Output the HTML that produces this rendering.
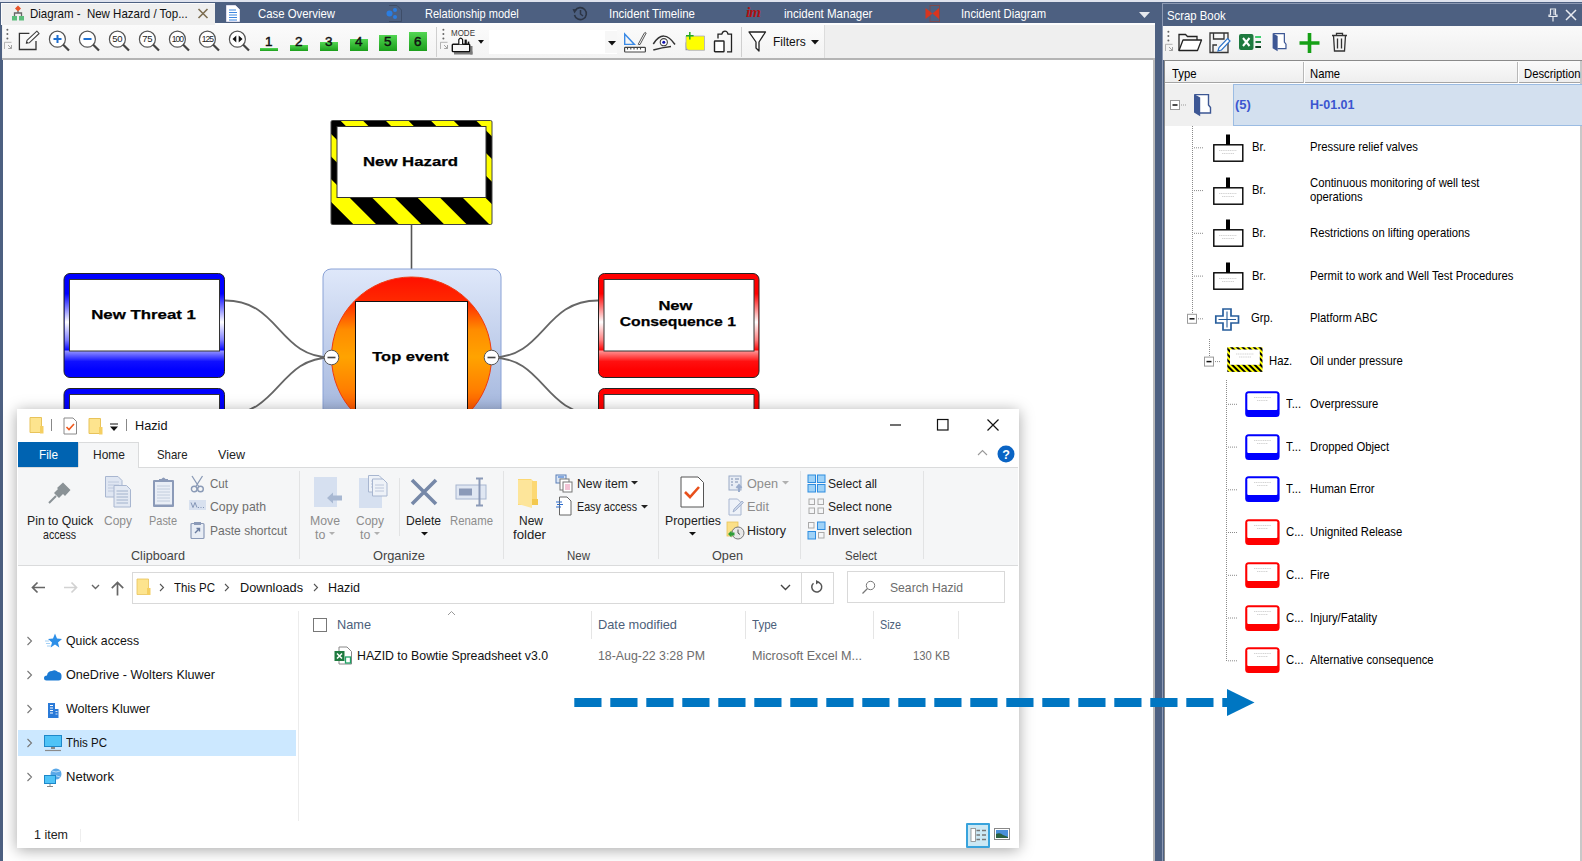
<!DOCTYPE html>
<html><head><meta charset="utf-8">
<style>
*{box-sizing:border-box;margin:0;padding:0}
html,body{width:1582px;height:861px;overflow:hidden}
body{position:relative;background:#4d6081;font-family:"Liberation Sans",sans-serif;color:#000}
.a{position:absolute}
.t{position:absolute;white-space:nowrap;line-height:1}
svg{position:absolute;overflow:visible}
.ex{font-size:12.4px;transform-origin:0 0}
.sb{font-size:13.4px;transform:scaleX(0.843);transform-origin:0 0;color:#000}
</style></head><body>
<!-- top strip -->
<div class="a" style="left:0;top:0;width:1582px;height:2px;background:#dfe3ee"></div>

<!-- ===== main tabs ===== -->



<div class="a" style="left:1px;top:3px;width:214px;height:21.5px;background:#efefef;border-top:1px solid #fbfbfb;border-left:1px solid #fbfbfb"></div>
<!-- tab contents -->
<svg style="left:11px;top:5px" width="14" height="16" viewBox="0 0 14 16">
 <path d="M7 0.5 L10 3.5 L7 6.5 L4 3.5Z" fill="#e8542a"/>
 <path d="M7 6 V8 M3.5 11 V8 H10.5 V11" stroke="#666" stroke-width="1.3" fill="none"/>
 <rect x="1" y="11" width="5" height="4.5" fill="#5cbd7c"/><rect x="8" y="11" width="5" height="4.5" fill="#5cbd7c"/>
</svg>
<div class="t" style="left:30.3px;top:7.3px;font-size:13px;color:#111;transform:scaleX(0.885);transform-origin:0 0">Diagram -&nbsp; New Hazard / Top...</div>
<svg style="left:197px;top:8px" width="12" height="11" viewBox="0 0 12 11"><path d="M1.5 1 L10.5 10 M10.5 1 L1.5 10" stroke="#7d6e52" stroke-width="1.6"/></svg>

<svg style="left:226px;top:5px" width="14" height="17" viewBox="0 0 14 17">
 <path d="M0.5 0.5 H9.5 L13.5 4.5 V16.5 H0.5Z" fill="#fff" stroke="#dde" stroke-width="1"/>
 <path d="M3 5H10M3 7.5H11M3 10H11M3 12.5H11M3 15H11" stroke="#3d86e0" stroke-width="1.2"/>
</svg>
<div class="t" style="left:257.6px;top:7.3px;font-size:13px;color:#fff;transform:scaleX(0.874);transform-origin:0 0">Case Overview</div>

<svg style="left:386px;top:5px" width="16" height="17" viewBox="0 0 16 17">
 <path d="M3 0.5 H11 L15.5 5 V16.5 H3" fill="none" stroke="#3e4d68" stroke-width="1"/>
 <circle cx="3.5" cy="8.5" r="3" fill="#2a7de1"/><circle cx="9" cy="5" r="2" fill="#2a7de1"/><circle cx="9" cy="12" r="2" fill="#2a7de1"/>
</svg>
<div class="t" style="left:424.9px;top:7.3px;font-size:13px;color:#fff;transform:scaleX(0.848);transform-origin:0 0">Relationship model</div>

<svg style="left:572px;top:6px" width="16" height="15" viewBox="0 0 16 15">
 <path d="M3.2 4.5 A6 6 0 1 1 2.5 9" fill="none" stroke="#2c3545" stroke-width="1.6"/>
 <path d="M0.5 3 L5 3.5 L2.5 7.5Z" fill="#2c3545"/>
 <path d="M8.5 4 V8 L11 10" fill="none" stroke="#2c3545" stroke-width="1.5"/>
</svg>
<div class="t" style="left:609px;top:7.3px;font-size:13px;color:#fff;transform:scaleX(0.881);transform-origin:0 0">Incident Timeline</div>

<div class="t" style="left:746px;top:5px;font-family:'Liberation Serif',serif;font-style:italic;font-weight:bold;font-size:15px;color:#b01010;letter-spacing:-1px">im</div>
<div class="t" style="left:783.5px;top:7.3px;font-size:13px;color:#fff;transform:scaleX(0.887);transform-origin:0 0">incident Manager</div>

<svg style="left:925px;top:5px" width="15" height="17" viewBox="0 0 15 17">
 <rect x="5" y="0.5" width="9.5" height="16" fill="none" stroke="#7a4a50" stroke-width="1"/>
 <path d="M0.5 3 L7.5 8.5 L0.5 14Z M14 3 L7.5 8.5 L14 14Z" fill="#d8351f"/>
</svg>
<div class="t" style="left:961px;top:7.3px;font-size:13px;color:#fff;transform:scaleX(0.865);transform-origin:0 0">Incident Diagram</div>
<svg style="left:1139px;top:12px" width="11" height="6" viewBox="0 0 11 6"><path d="M0 0H11L5.5 6Z" fill="#e6e9ef"/></svg>

<!-- scrap book header -->
<div class="t" style="left:1167.3px;top:8.9px;font-size:13px;color:#fff;transform:scaleX(0.873);transform-origin:0 0">Scrap Book</div>
<svg style="left:1548px;top:8px" width="10" height="14" viewBox="0 0 10 14"><path d="M2.5 1H7.5V7H9V8.5H1V7H2.5Z M5 8.5V13.5" fill="none" stroke="#e8ebf0" stroke-width="1.2"/><path d="M6 2V7" stroke="#e8ebf0" stroke-width="1"/></svg>
<svg style="left:1565px;top:9px" width="12" height="12" viewBox="0 0 12 12"><path d="M1 1L11 11M11 1L1 11" stroke="#e8ebf0" stroke-width="1.5"/></svg>

<!-- ===== toolbar ===== -->
<div class="a" style="left:2px;top:23px;width:1153px;height:37px;background:#efefef;border-top:2px solid #fdfdfd;border-bottom:2px solid #b4b4b4"></div>
<div class="a" style="left:2px;top:23px;width:213px;height:1.5px;background:#efefef"></div>


<!-- toolbar contents -->
<div class="a" style="left:3px;top:25px;width:822px;height:33px;background:linear-gradient(#fbfbfb,#f3f3f3);border-right:1px solid #dcdcdc"></div>
<svg style="left:3px;top:28px" width="10" height="22" viewBox="0 0 10 22">
 <circle cx="4.4" cy="1.8" r="1" fill="#666"/><circle cx="4.4" cy="6.1" r="1" fill="#666"/><circle cx="4.4" cy="10.4" r="1" fill="#666"/>
 <path d="M1.5 21V14.3H8.5" fill="none" stroke="#aaa" stroke-width="0.9"/><path d="M5 17L8.3 20.3M8.5 17V20.5H5.2" fill="none" stroke="#999" stroke-width="0.9"/>
</svg>
<!-- edit -->
<svg style="left:19px;top:31px" width="22" height="20" viewBox="0 0 22 20">
 <path d="M10.4 2.35H0.4V18.5H17V10" fill="none" stroke="#333" stroke-width="1.3"/>
 <path d="M7.3 12.3L8.0 9.4L17.9 0.1L20.1 2.5L10.2 11.8Z" fill="#fff" stroke="#444" stroke-width="1.1" stroke-linejoin="round"/>
 <path d="M7.3 12.3L7.8 10.5L9.1 11.8Z" fill="#222"/>
</svg>
<svg style="left:49px;top:30px" width="22" height="22" viewBox="0 0 22 22">
 <circle cx="8.4" cy="9.2" r="8" fill="#fff" stroke="#555" stroke-width="1.2"/>
 <path d="M14 14.5L20 20.5" stroke="#444" stroke-width="2.2"/><path d="M4.5 9H12.5M8.5 5V13" stroke="#1e6fd0" stroke-width="2"/></svg>
<svg style="left:79px;top:30px" width="22" height="22" viewBox="0 0 22 22">
 <circle cx="8.4" cy="9.2" r="8" fill="#fff" stroke="#555" stroke-width="1.2"/>
 <path d="M14 14.5L20 20.5" stroke="#444" stroke-width="2.2"/><path d="M4.5 9H12.5" stroke="#1e6fd0" stroke-width="2"/></svg>
<svg style="left:109px;top:30px" width="22" height="22" viewBox="0 0 22 22">
 <circle cx="8.4" cy="9.2" r="8" fill="#fff" stroke="#555" stroke-width="1.2"/>
 <path d="M14 14.5L20 20.5" stroke="#444" stroke-width="2.2"/><text x="8.3" y="12.4" text-anchor="middle" font-family="Liberation Sans" font-size="9.5" letter-spacing="-0.2" fill="#222">50</text></svg>
<svg style="left:139px;top:30px" width="22" height="22" viewBox="0 0 22 22">
 <circle cx="8.4" cy="9.2" r="8" fill="#fff" stroke="#555" stroke-width="1.2"/>
 <path d="M14 14.5L20 20.5" stroke="#444" stroke-width="2.2"/><text x="8.3" y="12.4" text-anchor="middle" font-family="Liberation Sans" font-size="9.5" letter-spacing="-0.2" fill="#222">75</text></svg>
<svg style="left:169px;top:30px" width="22" height="22" viewBox="0 0 22 22">
 <circle cx="8.4" cy="9.2" r="8" fill="#fff" stroke="#555" stroke-width="1.2"/>
 <path d="M14 14.5L20 20.5" stroke="#444" stroke-width="2.2"/><text x="8.3" y="12.4" text-anchor="middle" font-family="Liberation Sans" font-size="8.6" letter-spacing="-1px" fill="#222">100</text></svg>
<svg style="left:199px;top:30px" width="22" height="22" viewBox="0 0 22 22">
 <circle cx="8.4" cy="9.2" r="8" fill="#fff" stroke="#555" stroke-width="1.2"/>
 <path d="M14 14.5L20 20.5" stroke="#444" stroke-width="2.2"/><text x="8.3" y="12.4" text-anchor="middle" font-family="Liberation Sans" font-size="8.6" letter-spacing="-1px" fill="#222">125</text></svg>
<svg style="left:229px;top:30px" width="22" height="22" viewBox="0 0 22 22">
 <circle cx="8.4" cy="9.2" r="8" fill="#fff" stroke="#555" stroke-width="1.2"/>
 <path d="M14 14.5L20 20.5" stroke="#444" stroke-width="2.2"/><path d="M3.5 9L7.3 5.5V12.5Z M13.5 9L9.7 5.5V12.5Z" fill="#111"/></svg>
<div class="a" style="left:260px;top:48px;width:17.5px;height:3px;background:linear-gradient(#53d653,#1b9e1b)"></div>
<div class="t" style="left:260px;width:17.5px;text-align:center;top:34.5px;font-size:13.5px;color:#111;-webkit-text-stroke:0.45px #111">1</div>
<div class="a" style="left:290px;top:45px;width:17.5px;height:6px;background:linear-gradient(#53d653,#1b9e1b)"></div>
<div class="t" style="left:290px;width:17.5px;text-align:center;top:34.5px;font-size:13.5px;color:#111;-webkit-text-stroke:0.45px #111">2</div>
<div class="a" style="left:320px;top:42px;width:17.5px;height:9px;background:linear-gradient(#53d653,#1b9e1b)"></div>
<div class="t" style="left:320px;width:17.5px;text-align:center;top:34.5px;font-size:13.5px;color:#111;-webkit-text-stroke:0.45px #111">3</div>
<div class="a" style="left:350px;top:38.5px;width:17.5px;height:12.5px;background:linear-gradient(#53d653,#1b9e1b)"></div>
<div class="t" style="left:350px;width:17.5px;text-align:center;top:34.5px;font-size:13.5px;color:#111;-webkit-text-stroke:0.45px #111">4</div>
<div class="a" style="left:379px;top:35px;width:17.5px;height:16px;background:linear-gradient(#53d653,#1b9e1b)"></div>
<div class="t" style="left:379px;width:17.5px;text-align:center;top:34.5px;font-size:13.5px;color:#111;-webkit-text-stroke:0.45px #111">5</div>
<div class="a" style="left:409px;top:32px;width:17.5px;height:19px;background:linear-gradient(#53d653,#1b9e1b)"></div>
<div class="t" style="left:409px;width:17.5px;text-align:center;top:34.5px;font-size:13.5px;color:#111;-webkit-text-stroke:0.45px #111">6</div>
<div class="a" style="left:436px;top:27px;width:1px;height:30px;background:#cfcfcf"></div>
<svg style="left:439px;top:28px" width="10" height="22" viewBox="0 0 10 22">
 <circle cx="4.4" cy="1.8" r="1" fill="#666"/><circle cx="4.4" cy="6.1" r="1" fill="#666"/><circle cx="4.4" cy="10.4" r="1" fill="#666"/>
 <path d="M1.5 21V14.3H8.5" fill="none" stroke="#aaa" stroke-width="0.9"/><path d="M5 17L8.3 20.3M8.5 17V20.5H5.2" fill="none" stroke="#999" stroke-width="0.9"/>
</svg>
<div class="t" style="left:451px;top:28.5px;font-size:8.6px;color:#3a3a3a;transform:scaleX(0.93);transform-origin:0 0">MODE</div>
<svg style="left:450px;top:37px" width="24" height="18" viewBox="0 0 24 18">
 <rect x="4" y="14.5" width="18.5" height="3" fill="#7a7a7a"/><rect x="20.3" y="9" width="2.2" height="8.5" fill="#7a7a7a"/>
 <rect x="2.3" y="7.2" width="17.4" height="7.4" rx="0.8" fill="#f6f6f6" stroke="#111" stroke-width="1.4"/>
 <path d="M8.8 7.2V2.6Q10.7 -0.4 12.6 2.6V7.2" fill="#fff" stroke="#111" stroke-width="1.2"/>
 <rect x="14.6" y="2.6" width="2.2" height="4.6" fill="#111"/><rect x="17.7" y="4.6" width="1.6" height="2.6" fill="#111"/>
</svg>
<svg style="left:477.5px;top:40px" width="6" height="4" viewBox="0 0 6 4"><path d="M0 0H6L3 3.8Z" fill="#111"/></svg>
<div class="a" style="left:489px;top:30px;width:128px;height:24px;background:#fff"></div>
<div class="a" style="left:605px;top:31px;width:12px;height:22px;background:#f7f7f7"></div>
<svg style="left:607.5px;top:41px" width="8" height="5" viewBox="0 0 8 5"><path d="M0 0H8L4 4.5Z" fill="#111"/></svg>
<svg style="left:623px;top:31px" width="24" height="22" viewBox="0 0 24 22">
 <path d="M1.7 3V13.4H11.4Z" fill="none" stroke="#3a8ae6" stroke-width="1.4" stroke-linejoin="miter"/>
 <path d="M15.2 13.3L21.2 2.2Q22.3 0.8 23.2 2.0L17.0 13.6Z" fill="#fff" stroke="#555" stroke-width="1"/>
 <rect x="1.6" y="16.4" width="20.8" height="4.6" rx="0.8" fill="#fff" stroke="#444" stroke-width="1.2"/>
 <path d="M4.5 16.5V18.5M7.8 16.5V18.5M11 16.5V18.5M14.3 16.5V18.5M17.5 16.5V18.5" stroke="#444" stroke-width="1.1"/>
</svg>
<svg style="left:652px;top:34px" width="25" height="18" viewBox="0 0 25 18">
 <path d="M1.3 10Q11.5 -6 23 10.5" fill="none" stroke="#333" stroke-width="1.5"/>
 <circle cx="11.8" cy="8.2" r="3.6" fill="#fff" stroke="#444" stroke-width="1.1"/><circle cx="11.8" cy="8.2" r="1.5" fill="#1010b0"/>
 <path d="M1.3 16Q10 13.5 19 12.5" fill="none" stroke="#333" stroke-width="1.5"/>
</svg>
<svg style="left:684px;top:31px" width="22" height="21" viewBox="0 0 22 21">
 <path d="M1.5 11V19.3H6Z" fill="#999"/>
 <path d="M2 5H20.5V19.3H6Q2 19.3 2 15Z" fill="#ffff00" stroke="#a8a8c8" stroke-width="0.8"/>
 <path d="M5.8 1V8.5M2 4.8H9.6" stroke="#22aa22" stroke-width="1.5"/>
</svg>
<svg style="left:713px;top:30px" width="20" height="23" viewBox="0 0 20 23">
 <path d="M5 8.5V4.2H8.8Q9.6 1.2 12 1.2Q14.4 1.2 15 4.2H18.5V21.8H14" fill="none" stroke="#222" stroke-width="1.3"/>
 <rect x="1.5" y="11" width="9.5" height="10.8" rx="0.6" fill="#fff" stroke="#222" stroke-width="1.4"/>
</svg>
<div class="a" style="left:741px;top:27px;width:1px;height:30px;background:#cfcfcf"></div>
<svg style="left:748px;top:31px" width="19" height="21" viewBox="0 0 19 21">
 <path d="M1 1H17.5L11 11V20L8 17V11Z" fill="#fff" stroke="#222" stroke-width="1.3" stroke-linejoin="round"/>
</svg>
<div class="t" style="left:773.3px;top:34.9px;font-size:13px;color:#111;transform:scaleX(0.924);transform-origin:0 0">Filters</div>
<svg style="left:810.5px;top:40px" width="8" height="5" viewBox="0 0 8 5"><path d="M0 0H8L4 4.5Z" fill="#111"/></svg>

<!-- ===== canvas ===== -->
<div class="a" style="left:3px;top:60px;width:1150px;height:801px;background:#fff"></div>
<div class="a" style="left:1153px;top:58px;width:2px;height:803px;background:#b9b9b9"></div>

<!-- ===== diagram ===== -->
<svg style="left:0;top:0" width="1153" height="861" viewBox="0 0 1153 861">
 <defs>
  <pattern id="haz" patternUnits="userSpaceOnUse" width="32" height="32" patternTransform="rotate(-45) translate(27.4 0)">
   <rect width="32" height="32" fill="#000"/><rect x="0" y="0" width="16" height="32" fill="#ffff00"/>
  </pattern>
  <linearGradient id="blueSide" x1="0" y1="0" x2="0" y2="1">
   <stop offset="0" stop-color="#0000ff"/><stop offset="0.2" stop-color="#0000ff"/><stop offset="0.6" stop-color="#ffffff"/><stop offset="0.85" stop-color="#8080ff"/><stop offset="1" stop-color="#0000ff"/>
  </linearGradient>
  <linearGradient id="blueBot" x1="0" y1="0" x2="0" y2="1">
   <stop offset="0" stop-color="#9a9aff"/><stop offset="0.55" stop-color="#1010ff"/><stop offset="1" stop-color="#0000ff"/>
  </linearGradient>
  <linearGradient id="redSide" x1="0" y1="0" x2="0" y2="1">
   <stop offset="0" stop-color="#ff0000"/><stop offset="0.2" stop-color="#ff0000"/><stop offset="0.6" stop-color="#ffffff"/><stop offset="0.85" stop-color="#ff8080"/><stop offset="1" stop-color="#ff0000"/>
  </linearGradient>
  <linearGradient id="redBot" x1="0" y1="0" x2="0" y2="1">
   <stop offset="0" stop-color="#ff9a9a"/><stop offset="0.55" stop-color="#ff1010"/><stop offset="1" stop-color="#ff0000"/>
  </linearGradient>
  <linearGradient id="cont" x1="0" y1="0" x2="0" y2="1">
   <stop offset="0" stop-color="#dfe8fa"/><stop offset="1" stop-color="#8ea4d2"/>
  </linearGradient>
  <linearGradient id="circ" x1="0" y1="0" x2="0" y2="1">
   <stop offset="0" stop-color="#ff1000"/><stop offset="0.16" stop-color="#ff2a00"/><stop offset="0.33" stop-color="#ff8c00"/><stop offset="0.5" stop-color="#ffa300"/><stop offset="0.7" stop-color="#ff8000"/><stop offset="1" stop-color="#ff2000"/>
  </linearGradient>
  <g id="box">
   <rect x="0" y="0" width="160.5" height="104" rx="6"/>
  </g>
 </defs>
 <!-- hazard -->
 <rect x="331" y="120.5" width="161" height="104" rx="1.5" fill="url(#haz)" stroke="#444" stroke-width="1"/>
 <rect x="337" y="126.5" width="149" height="71" fill="#fff" stroke="#333" stroke-width="1"/>
 <text x="363" y="165.6" textLength="95" lengthAdjust="spacingAndGlyphs" font-family="Liberation Sans" font-weight="bold" font-size="13.2" fill="#000" stroke="#000" stroke-width="0.25">New Hazard</text>
 <path d="M411.5 224.5V277" stroke="#555" stroke-width="1.6"/>
 <!-- container -->
 <rect x="323" y="269" width="178" height="200" rx="8" fill="url(#cont)" stroke="#8aa2d6" stroke-width="1"/>
 <circle cx="411.5" cy="357" r="80" fill="url(#circ)" stroke="#f03a10" stroke-width="1"/>
 <rect x="355.5" y="301.5" width="112" height="150" fill="#fff" stroke="#111" stroke-width="1"/>
 <text x="372.3" y="360.9" textLength="76.5" lengthAdjust="spacingAndGlyphs" font-family="Liberation Sans" font-weight="bold" font-size="13.2" fill="#000" stroke="#000" stroke-width="0.25">Top event</text>
 <!-- curves -->
 <path d="M225 300.5 C280 300.5 278 357.5 331.5 357.5 M225 414.5 C280 414.5 278 357.5 331.5 357.5" fill="none" stroke="#666" stroke-width="1.8"/>
 <path d="M598 300.5 C543 300.5 545 357.5 491.5 357.5 M598 414.5 C543 414.5 545 357.5 491.5 357.5" fill="none" stroke="#666" stroke-width="1.8"/>
 <circle cx="331.5" cy="357.5" r="7.3" fill="#fff" stroke="#555" stroke-width="1"/><path d="M327.5 357.5H335.5" stroke="#444" stroke-width="1.6"/>
 <circle cx="491.5" cy="357.5" r="7.3" fill="#fff" stroke="#555" stroke-width="1"/><path d="M487.5 357.5H495.5" stroke="#444" stroke-width="1.6"/>
 <g>
  <rect x="64" y="273.5" width="160.5" height="104" rx="6" fill="#0000ff"/>
  <rect x="64.5" y="279.5" width="159.5" height="71" fill="url(#blueSide)"/>
  <rect x="64.5" y="350.5" width="159.5" height="20" fill="url(#blueBot)"/>
  <rect x="64" y="273.5" width="160.5" height="104" rx="6" fill="none" stroke="#222" stroke-width="1"/>
  <rect x="69.5" y="279.5" width="150" height="71.5" fill="#fff" stroke="#333" stroke-width="1"/>
  <text x="91.2" y="319" textLength="104.8" lengthAdjust="spacingAndGlyphs" font-family="Liberation Sans" font-weight="bold" font-size="13.2" fill="#000" stroke="#000" stroke-width="0.25">New Threat 1</text>
 </g>
 <g>
  <rect x="64" y="388.5" width="160.5" height="104" rx="6" fill="#0000ff"/>
  <rect x="64.5" y="394.5" width="159.5" height="71" fill="url(#blueSide)"/>
  <rect x="64.5" y="465.5" width="159.5" height="20" fill="url(#blueBot)"/>
  <rect x="64" y="388.5" width="160.5" height="104" rx="6" fill="none" stroke="#222" stroke-width="1"/>
  <rect x="69.5" y="394.5" width="150" height="71.5" fill="#fff" stroke="#333" stroke-width="1"/>
 </g>
 <g>
  <rect x="598.5" y="273.5" width="160.5" height="104" rx="6" fill="#ff0000"/>
  <rect x="599.0" y="279.5" width="159.5" height="71" fill="url(#redSide)"/>
  <rect x="599.0" y="350.5" width="159.5" height="20" fill="url(#redBot)"/>
  <rect x="598.5" y="273.5" width="160.5" height="104" rx="6" fill="none" stroke="#222" stroke-width="1"/>
  <rect x="604.0" y="279.5" width="150" height="71.5" fill="#fff" stroke="#333" stroke-width="1"/>
  <text x="658.4" y="309.7" textLength="34" lengthAdjust="spacingAndGlyphs" font-family="Liberation Sans" font-weight="bold" font-size="13.2" fill="#000" stroke="#000" stroke-width="0.25">New</text>
  <text x="619.7" y="326.4" textLength="116.3" lengthAdjust="spacingAndGlyphs" font-family="Liberation Sans" font-weight="bold" font-size="13.2" fill="#000" stroke="#000" stroke-width="0.25">Consequence 1</text>
 </g>
 <g>
  <rect x="598.5" y="388.5" width="160.5" height="104" rx="6" fill="#ff0000"/>
  <rect x="599.0" y="394.5" width="159.5" height="71" fill="url(#redSide)"/>
  <rect x="599.0" y="465.5" width="159.5" height="20" fill="url(#redBot)"/>
  <rect x="598.5" y="388.5" width="160.5" height="104" rx="6" fill="none" stroke="#222" stroke-width="1"/>
  <rect x="604.0" y="394.5" width="150" height="71.5" fill="#fff" stroke="#333" stroke-width="1"/>
 </g>
</svg>

<!-- ===== scrap book panel ===== -->
<div class="a" style="left:1162px;top:3px;width:420px;height:858px;border-left:1px solid #8c99b3;border-top:1px solid #8c99b3"></div>
<div class="a" style="left:1163px;top:26px;width:419px;height:34px;background:linear-gradient(#fafafa,#efefef)"></div>
<div class="a" style="left:1164px;top:60px;width:418px;height:801px;background:#fff;border-left:1px solid #8a8a8a;border-top:1px solid #8a8a8a"></div>


<!-- scrap toolbar -->
<svg style="left:1164px;top:30px" width="10" height="22" viewBox="0 0 10 22">
 <circle cx="4.4" cy="1.8" r="1" fill="#666"/><circle cx="4.4" cy="6.1" r="1" fill="#666"/><circle cx="4.4" cy="10.4" r="1" fill="#666"/>
 <path d="M1.5 21V14.3H8.5" fill="none" stroke="#aaa" stroke-width="0.9"/><path d="M5 17L8.3 20.3M8.5 17V20.5H5.2" fill="none" stroke="#999" stroke-width="0.9"/>
</svg>
<svg style="left:1178px;top:33px" width="24" height="19" viewBox="0 0 24 19">
 <path d="M1 17.5V1.5H7.5L9.5 3.5H19V7" fill="none" stroke="#222" stroke-width="1.3"/>
 <path d="M1 17.5L5 7H23.5L19.5 17.5Z" fill="#fff" stroke="#222" stroke-width="1.3" stroke-linejoin="round"/>
</svg>
<svg style="left:1209px;top:32px" width="22" height="22" viewBox="0 0 22 22">
 <path d="M1 1H19V20.5H1Z M4.5 1V7H15V1 M4 20.5V13H8" fill="none" stroke="#333" stroke-width="1.3"/>
 <path d="M9 19L10 15.5L18.5 6.5L21 9L12.5 18Z" fill="#fff" stroke="#2d74c9" stroke-width="1.2"/>
</svg>
<svg style="left:1239px;top:34px" width="24" height="17" viewBox="0 0 24 17">
 <rect x="0" y="0" width="14.5" height="16" rx="2" fill="#1e7a3f"/>
 <path d="M4 4L10.5 12M10.5 4L4 12" stroke="#fff" stroke-width="2"/>
 <path d="M16.5 3H22M16.5 8H22M16.5 13H22" stroke="#1e7a3f" stroke-width="2"/>
 <path d="M16.5 3H22" stroke="#3fcf6f" stroke-width="2"/><path d="M16.5 13H22" stroke="#0d3d1f" stroke-width="2"/>
</svg>
<svg style="left:1271px;top:31px" width="17" height="23" viewBox="0 0 21 25"><path d="M2.7 1.6H16.5V12L18.5 14.5V20H8" fill="#fff" stroke="#3d5794" stroke-width="1.5"/><path d="M2 1L8.2 4.6V23.2L2 19.6Z" fill="#3d5794"/></svg>
<svg style="left:1299px;top:33px" width="21" height="20" viewBox="0 0 21 20"><path d="M10.5 0V20M0.5 10H20.5" stroke="#16a016" stroke-width="3.6"/></svg>
<svg style="left:1331px;top:32px" width="17" height="20" viewBox="0 0 17 20">
 <path d="M1 3.5H16 M5.5 3.5V1.3H11.5V3.5" fill="none" stroke="#333" stroke-width="1.3"/>
 <path d="M2.5 3.5L3.5 19H13.5L14.5 3.5 M6.5 6.5V16.5 M10.5 6.5V16.5" fill="none" stroke="#333" stroke-width="1.3"/>
</svg>


<!-- scrap grid header -->
<div class="a" style="left:1165px;top:61px;width:417px;height:22px;background:linear-gradient(#fafafa,#eeeeee);border-bottom:1px solid #a5a5a5"></div>
<div class="a" style="left:1303px;top:62px;width:1px;height:21px;background:#b8b8b8"></div><div class="a" style="left:1304px;top:62px;width:1px;height:21px;background:#fff"></div>
<div class="a" style="left:1517px;top:62px;width:1px;height:21px;background:#b8b8b8"></div><div class="a" style="left:1518px;top:62px;width:1px;height:21px;background:#fff"></div>
<div class="a" style="left:1580px;top:61px;width:2px;height:800px;background:#c8c8c8"></div>
<div class="t sb" style="left:1172px;top:66.5px">Type</div>
<div class="t sb" style="left:1310px;top:66.5px">Name</div>
<div class="t sb" style="left:1524px;top:66.5px">Description</div>
<!-- selected row -->
<div class="a" style="left:1165px;top:84px;width:68px;height:42px;background:#f0f0f0"></div>
<div class="a" style="left:1233px;top:84px;width:349px;height:42px;background:#d3e0ef;border:1px solid #9bbce3;border-right:none"></div>
<svg style="left:1169px;top:99px" width="20" height="13" viewBox="0 0 20 13"><rect x="1.5" y="1.5" width="9" height="9" fill="#fff" stroke="#9a9a9a"/><path d="M3.5 6H8.5" stroke="#111" stroke-width="1.5"/><path d="M12 6H18" stroke="#999" stroke-width="1" stroke-dasharray="1 1"/></svg>
<svg style="left:1192px;top:93px" width="21" height="25" viewBox="0 0 21 25"><path d="M2.7 1.6H16.5V12L18.5 14.5V20H8" fill="#fff" stroke="#3d5794" stroke-width="1.4"/><path d="M2 1L8.2 4.6V23.2L2 19.6Z" fill="#3d5794"/></svg>
<div class="t sb" style="left:1235px;top:98px;font-weight:bold;color:#3b55d0;font-size:13.4px;transform:scaleX(0.97)">(5)</div>
<div class="t sb" style="left:1310px;top:98px;font-weight:bold;color:#3b55d0;font-size:13.4px;transform:scaleX(0.935)">H-01.01</div>
<!-- tree lines -->
<svg style="left:1165px;top:126px" width="100" height="540" viewBox="1165 126 100 540">
 <path d="M1192.5 126V314 M1209.5 339V357 M1226.5 380V661" stroke="#8a8a8a" stroke-width="1" stroke-dasharray="1 1" fill="none"/>

 <path d="M1194 147.8H1204" stroke="#8a8a8a" stroke-width="1" stroke-dasharray="1 1"/>
 <path d="M1194 190.6H1204" stroke="#8a8a8a" stroke-width="1" stroke-dasharray="1 1"/>
 <path d="M1194 233.3H1204" stroke="#8a8a8a" stroke-width="1" stroke-dasharray="1 1"/>
 <path d="M1194 276.1H1204" stroke="#8a8a8a" stroke-width="1" stroke-dasharray="1 1"/>
 <rect x="1187.5" y="314.3" width="9" height="9" fill="#fff" stroke="#9a9a9a"/><path d="M1189.5 318.8H1194.5" stroke="#111" stroke-width="1.5"/><path d="M1198 318.8H1204" stroke="#8a8a8a" stroke-dasharray="1 1"/>
 <rect x="1204.5" y="357.1" width="9" height="9" fill="#fff" stroke="#9a9a9a"/><path d="M1206.5 361.6H1211.5" stroke="#111" stroke-width="1.5"/><path d="M1215 361.6H1221" stroke="#8a8a8a" stroke-dasharray="1 1"/>
 <path d="M1228 404.3H1238" stroke="#8a8a8a" stroke-width="1" stroke-dasharray="1 1"/>
 <path d="M1228 447.1H1238" stroke="#8a8a8a" stroke-width="1" stroke-dasharray="1 1"/>
 <path d="M1228 489.8H1238" stroke="#8a8a8a" stroke-width="1" stroke-dasharray="1 1"/>
 <path d="M1228 532.5H1238" stroke="#8a8a8a" stroke-width="1" stroke-dasharray="1 1"/>
 <path d="M1228 575.3H1238" stroke="#8a8a8a" stroke-width="1" stroke-dasharray="1 1"/>
 <path d="M1228 618.0H1238" stroke="#8a8a8a" stroke-width="1" stroke-dasharray="1 1"/>
 <path d="M1228 660.8H1238" stroke="#8a8a8a" stroke-width="1" stroke-dasharray="1 1"/>
</svg>
<svg style="left:1212px;top:132.8px" width="32" height="30" viewBox="0 0 32 30"><rect x="14" y="1.5" width="4" height="12" fill="#000"/><rect x="1.8" y="11.8" width="29" height="16.4" fill="#fff" stroke="#000" stroke-width="1.4"/><path d="M7 17.5H25 M10 20.5H22" stroke="#c8c8c8" stroke-width="0.8" stroke-dasharray="1.2 0.6"/></svg>
<div class="t sb" style="left:1251.7px;top:140.46px">Br.</div>
<div class="t sb" style="left:1309.5px;top:140.46px">Pressure relief valves</div>
<svg style="left:1212px;top:175.6px" width="32" height="30" viewBox="0 0 32 30"><rect x="14" y="1.5" width="4" height="12" fill="#000"/><rect x="1.8" y="11.8" width="29" height="16.4" fill="#fff" stroke="#000" stroke-width="1.4"/><path d="M7 17.5H25 M10 20.5H22" stroke="#c8c8c8" stroke-width="0.8" stroke-dasharray="1.2 0.6"/></svg>
<div class="t sb" style="left:1251.7px;top:183.21px">Br.</div>
<div class="t sb" style="left:1309.5px;top:176.41px">Continuous monitoring of well test</div>
<div class="t sb" style="left:1309.5px;top:190.01px">operations</div>
<svg style="left:1212px;top:218.3px" width="32" height="30" viewBox="0 0 32 30"><rect x="14" y="1.5" width="4" height="12" fill="#000"/><rect x="1.8" y="11.8" width="29" height="16.4" fill="#fff" stroke="#000" stroke-width="1.4"/><path d="M7 17.5H25 M10 20.5H22" stroke="#c8c8c8" stroke-width="0.8" stroke-dasharray="1.2 0.6"/></svg>
<div class="t sb" style="left:1251.7px;top:225.96px">Br.</div>
<div class="t sb" style="left:1309.5px;top:225.96px">Restrictions on lifting operations</div>
<svg style="left:1212px;top:261.1px" width="32" height="30" viewBox="0 0 32 30"><rect x="14" y="1.5" width="4" height="12" fill="#000"/><rect x="1.8" y="11.8" width="29" height="16.4" fill="#fff" stroke="#000" stroke-width="1.4"/><path d="M7 17.5H25 M10 20.5H22" stroke="#c8c8c8" stroke-width="0.8" stroke-dasharray="1.2 0.6"/></svg>
<div class="t sb" style="left:1251.7px;top:268.71px">Br.</div>
<div class="t sb" style="left:1309.5px;top:268.71px">Permit to work and Well Test Procedures</div>
<svg style="left:1215px;top:307.8px" width="25" height="23" viewBox="0 0 25 23"><path d="M8 1H16V8H23.5V15H16V22H8V15H0.8V8H8Z" fill="#fff" stroke="#275d9c" stroke-width="1.7"/><path d="M12 3.5V19.5M3.5 11.5H21" stroke="#275d9c" stroke-width="1.1"/></svg>
<div class="t sb" style="left:1251px;top:311.46px">Grp.</div>
<div class="t sb" style="left:1309.5px;top:311.46px">Platform ABC</div>
<svg style="left:1227px;top:347.4px" width="36" height="25" viewBox="0 0 36 25"><defs><pattern id="hz2" patternUnits="userSpaceOnUse" width="4" height="4" patternTransform="rotate(-45)"><rect width="4" height="4" fill="#000"/><rect width="2" height="4" fill="#ffff00"/></pattern></defs><rect x="0.3" y="0.2" width="35.2" height="24.7" fill="url(#hz2)"/><rect x="3" y="2.5" width="29.8" height="15.3" fill="#fff"/><path d="M9 7H27 M12 10H24" stroke="#c8c8c8" stroke-width="0.8" stroke-dasharray="1.2 0.6"/></svg>
<div class="t sb" style="left:1268.8px;top:354.21px">Haz.</div>
<div class="t sb" style="left:1309.5px;top:354.21px">Oil under pressure</div>
<svg style="left:1245px;top:390.8px" width="35" height="27" viewBox="0 0 35 27"><rect x="0.2" y="0.2" width="34.4" height="25.8" rx="3.5" fill="#0000ff"/><rect x="2.3" y="2.3" width="30" height="16.8" rx="1" fill="#fff"/><path d="M9 6.5H26 M12 9.5H23" stroke="#c8c8c8" stroke-width="0.8" stroke-dasharray="1.2 0.6"/></svg>
<div class="t sb" style="left:1286px;top:396.96px">T...</div>
<div class="t sb" style="left:1309.5px;top:396.96px">Overpressure</div>
<svg style="left:1245px;top:433.6px" width="35" height="27" viewBox="0 0 35 27"><rect x="0.2" y="0.2" width="34.4" height="25.8" rx="3.5" fill="#0000ff"/><rect x="2.3" y="2.3" width="30" height="16.8" rx="1" fill="#fff"/><path d="M9 6.5H26 M12 9.5H23" stroke="#c8c8c8" stroke-width="0.8" stroke-dasharray="1.2 0.6"/></svg>
<div class="t sb" style="left:1286px;top:439.71px">T...</div>
<div class="t sb" style="left:1309.5px;top:439.71px">Dropped Object</div>
<svg style="left:1245px;top:476.3px" width="35" height="27" viewBox="0 0 35 27"><rect x="0.2" y="0.2" width="34.4" height="25.8" rx="3.5" fill="#0000ff"/><rect x="2.3" y="2.3" width="30" height="16.8" rx="1" fill="#fff"/><path d="M9 6.5H26 M12 9.5H23" stroke="#c8c8c8" stroke-width="0.8" stroke-dasharray="1.2 0.6"/></svg>
<div class="t sb" style="left:1286px;top:482.46px">T...</div>
<div class="t sb" style="left:1309.5px;top:482.46px">Human Error</div>
<svg style="left:1245px;top:519.0px" width="35" height="27" viewBox="0 0 35 27"><rect x="0.2" y="0.2" width="34.4" height="25.8" rx="3.5" fill="#ff0000"/><rect x="2.3" y="2.3" width="30" height="16.8" rx="1" fill="#fff"/><path d="M9 6.5H26 M12 9.5H23" stroke="#c8c8c8" stroke-width="0.8" stroke-dasharray="1.2 0.6"/></svg>
<div class="t sb" style="left:1286px;top:525.21px">C...</div>
<div class="t sb" style="left:1309.5px;top:525.21px">Unignited Release</div>
<svg style="left:1245px;top:561.8px" width="35" height="27" viewBox="0 0 35 27"><rect x="0.2" y="0.2" width="34.4" height="25.8" rx="3.5" fill="#ff0000"/><rect x="2.3" y="2.3" width="30" height="16.8" rx="1" fill="#fff"/><path d="M9 6.5H26 M12 9.5H23" stroke="#c8c8c8" stroke-width="0.8" stroke-dasharray="1.2 0.6"/></svg>
<div class="t sb" style="left:1286px;top:567.96px">C...</div>
<div class="t sb" style="left:1309.5px;top:567.96px">Fire</div>
<svg style="left:1245px;top:604.5px" width="35" height="27" viewBox="0 0 35 27"><rect x="0.2" y="0.2" width="34.4" height="25.8" rx="3.5" fill="#ff0000"/><rect x="2.3" y="2.3" width="30" height="16.8" rx="1" fill="#fff"/><path d="M9 6.5H26 M12 9.5H23" stroke="#c8c8c8" stroke-width="0.8" stroke-dasharray="1.2 0.6"/></svg>
<div class="t sb" style="left:1286px;top:610.71px">C...</div>
<div class="t sb" style="left:1309.5px;top:610.71px">Injury/Fatality</div>
<svg style="left:1245px;top:647.3px" width="35" height="27" viewBox="0 0 35 27"><rect x="0.2" y="0.2" width="34.4" height="25.8" rx="3.5" fill="#ff0000"/><rect x="2.3" y="2.3" width="30" height="16.8" rx="1" fill="#fff"/><path d="M9 6.5H26 M12 9.5H23" stroke="#c8c8c8" stroke-width="0.8" stroke-dasharray="1.2 0.6"/></svg>
<div class="t sb" style="left:1286px;top:653.46px">C...</div>
<div class="t sb" style="left:1309.5px;top:653.46px">Alternative consequence</div>
<!-- ===== explorer ===== -->
<div class="a" id="exp" style="left:17px;top:409px;width:1002px;height:439px;background:#fff;box-shadow:0 2px 14px rgba(0,0,0,0.35)"></div>

<!-- explorer title bar -->
<svg style="left:29px;top:416px" width="16" height="19" viewBox="0 0 16 19"><path d="M1 1.5H12.5V16.5H1Z" fill="#fde48e" stroke="#e8c35a" stroke-width="1"/><path d="M11 10H14.5V17.5H11Z" fill="#f5cf62"/></svg>
<div class="a" style="left:51px;top:419px;width:1px;height:12px;background:#888"></div>
<svg style="left:63px;top:417px" width="15" height="18" viewBox="0 0 15 18"><path d="M1 1H10L13.5 4.5V17H1Z" fill="#fff" stroke="#8a8a8a" stroke-width="1"/><path d="M3.5 10L6 12.5L11 7" fill="none" stroke="#f0581c" stroke-width="1.6"/></svg>
<svg style="left:88px;top:417px" width="16" height="19" viewBox="0 0 16 19"><path d="M1 1.5H12.5V16.5H1Z" fill="#fde48e" stroke="#e8c35a" stroke-width="1"/><path d="M11 10H14.5V17.5H11Z" fill="#f5cf62"/></svg>
<svg style="left:109px;top:423px" width="10" height="9" viewBox="0 0 10 9"><path d="M1 1H9" stroke="#111" stroke-width="1"/><path d="M1 3.5H9L5 8Z" fill="#111"/></svg>
<div class="a" style="left:126px;top:419px;width:1px;height:12px;background:#888"></div>
<div class="t ex" style="left:135px;top:419.5px;color:#111;transform:scaleX(1.026)">Hazid</div>
<svg style="left:889px;top:424px" width="13" height="2" viewBox="0 0 13 2"><path d="M1 1H12" stroke="#111" stroke-width="1.2"/></svg>
<svg style="left:936px;top:418px" width="14" height="14" viewBox="0 0 14 14"><rect x="1.5" y="1.5" width="10.5" height="10.5" fill="none" stroke="#111" stroke-width="1.2"/></svg>
<svg style="left:986px;top:418px" width="14" height="14" viewBox="0 0 14 14"><path d="M1.5 1.5L12.5 12.5M12.5 1.5L1.5 12.5" stroke="#111" stroke-width="1.2"/></svg>

<!-- tabs -->
<div class="a" style="left:18px;top:442px;width:60px;height:25px;background:#0063b1"></div>
<div class="t ex" style="left:38.5px;top:449px;color:#fff;transform:scaleX(0.951)">File</div>
<div class="a" style="left:78px;top:442px;width:61px;height:26px;background:#f5f6f7;border:1px solid #dadbdc;border-bottom:none"></div>
<div class="t ex" style="left:93px;top:449px;color:#222;transform:scaleX(0.968)">Home</div>
<div class="t ex" style="left:156.5px;top:449px;color:#222;transform:scaleX(0.922)">Share</div>
<div class="t ex" style="left:218px;top:449px;color:#222;transform:scaleX(1.013)">View</div>
<svg style="left:977px;top:449px" width="11" height="7" viewBox="0 0 11 7"><path d="M1 6L5.5 1.5L10 6" fill="none" stroke="#999" stroke-width="1.1"/></svg>
<svg style="left:997px;top:445px" width="18" height="18" viewBox="0 0 18 18"><circle cx="9" cy="9" r="8.5" fill="#0a64c4"/><text x="9" y="13.6" text-anchor="middle" font-family="Liberation Sans" font-weight="bold" font-size="12.5" fill="#fff">?</text></svg>

<!-- ribbon -->
<div class="a" style="left:18px;top:467px;width:1000px;height:99px;background:#f5f6f7;border-top:1px solid #dadbdc;border-bottom:1px solid #dadbdc"></div>
<div class="a" style="left:78px;top:467px;width:60px;height:1px;background:#f5f6f7"></div>
<div class="a" style="left:298.5px;top:471px;width:1px;height:88px;background:#e2e3e4"></div>
<div class="a" style="left:503px;top:471px;width:1px;height:88px;background:#e2e3e4"></div>
<div class="a" style="left:658px;top:471px;width:1px;height:88px;background:#e2e3e4"></div>
<div class="a" style="left:800px;top:471px;width:1px;height:88px;background:#e2e3e4"></div>
<div class="a" style="left:923px;top:471px;width:1px;height:88px;background:#e2e3e4"></div>
<div class="a" style="left:398.5px;top:478px;width:1px;height:58px;background:#e2e3e4"></div>

<!-- clipboard group -->
<svg style="left:48px;top:481px" width="24" height="23" viewBox="0 0 24 23"><path d="M1 22L8 15" stroke="#8a9296" stroke-width="2"/><path d="M9 7L15 1.5L22.5 9L17 15L15 13L11 17L6 12L10 8Z" fill="#8a9296"/></svg>
<div class="t ex" style="left:27px;top:514.9px;color:#222;transform:scaleX(0.988)">Pin to Quick</div>
<div class="t ex" style="left:43px;top:528.7px;color:#222;transform:scaleX(0.855)">access</div>
<svg style="left:105px;top:476px" width="27" height="32" viewBox="0 0 27 32"><path d="M0.5 0.5H13L17 4.5V21H0.5Z" fill="#dfe6f2" stroke="#a8b6d0"/><path d="M3 6H14M3 9H14M3 12H14M3 15H14" stroke="#b5c2d8" stroke-width="0.8"/><path d="M9 9.5H21.5L25.5 13.5V31H9Z" fill="#e3e9f3" stroke="#a8b6d0"/><path d="M11.5 15H23M11.5 18H23M11.5 21H23M11.5 24H23M11.5 27H23" stroke="#9aabc8" stroke-width="0.9"/></svg>
<div class="t ex" style="left:104px;top:514.9px;color:#8d8d8d;transform:scaleX(0.968)">Copy</div>
<svg style="left:152px;top:476px" width="23" height="32" viewBox="0 0 23 32"><rect x="1" y="4" width="21" height="27" rx="1" fill="#8b9ab8"/><rect x="3" y="6" width="17" height="22.5" fill="#e9eef6"/><path d="M5 10H18M5 13H18M5 16H18M5 19H18M5 22H18M5 25H18" stroke="#b8c4d8" stroke-width="0.8"/><path d="M7 6V3H9.5Q11.5 0 13.5 3H16V6Z" fill="#8b9ab8"/></svg>
<div class="t ex" style="left:149px;top:514.9px;color:#8d8d8d;transform:scaleX(0.884)">Paste</div>
<svg style="left:190px;top:475px" width="15" height="18" viewBox="0 0 15 18"><path d="M2 1L9 12M12.5 1L5.5 12" stroke="#8a9ab6" stroke-width="1.3"/><circle cx="4.2" cy="14" r="2.8" fill="none" stroke="#8a9ab6" stroke-width="1.4"/><circle cx="10.5" cy="14" r="2.8" fill="none" stroke="#8a9ab6" stroke-width="1.4"/></svg>
<div class="t ex" style="left:210px;top:477.9px;color:#6e6e6e;transform:scaleX(0.933)">Cut</div>
<svg style="left:189px;top:500px" width="17" height="10" viewBox="0 0 17 10"><rect x="0" y="0" width="17" height="10" fill="#d8e1ef"/><path d="M2 2.5L4 7.5L6 2.5L8 7.5M9 7.5H10M11.5 7.5H12.5M14 7.5H15" stroke="#7b8db0" stroke-width="0.9" fill="none"/></svg>
<div class="t ex" style="left:210px;top:501.2px;color:#6e6e6e;transform:scaleX(0.991)">Copy path</div>
<svg style="left:190px;top:521px" width="15" height="18" viewBox="0 0 15 18"><rect x="1" y="2.5" width="13" height="15" rx="1" fill="#e8edf5" stroke="#8b9ab8" stroke-width="1.2"/><rect x="4" y="1" width="7" height="3" fill="#8b9ab8"/><path d="M5 12L9.5 7.5M6.5 7.5H9.5V10.5" stroke="#6a7ca0" stroke-width="1.4" fill="none"/></svg>
<div class="t ex" style="left:210px;top:525px;color:#6e6e6e;transform:scaleX(0.972)">Paste shortcut</div>
<div class="t ex" style="left:131px;top:550px;color:#444;transform:scaleX(1.018)">Clipboard</div>

<!-- organize -->
<svg style="left:313px;top:476px" width="30" height="33" viewBox="0 0 30 33"><rect x="1" y="1" width="23" height="30" fill="#d6e0f0"/><path d="M14 22L20 16.5V19.5H29V24.5H20V27.5Z" fill="#a8b8d2"/></svg>
<div class="t ex" style="left:310px;top:514.9px;color:#8d8d8d;transform:scaleX(0.990)">Move</div>
<div class="t ex" style="left:315px;top:528.7px;color:#8d8d8d">to</div>
<svg style="left:329px;top:532px" width="6" height="4" viewBox="0 0 6 4"><path d="M0 0H6L3 3Z" fill="#b0b0b0"/></svg>
<svg style="left:358px;top:475px" width="30" height="34" viewBox="0 0 30 34"><rect x="1" y="3" width="23" height="30" fill="#d6e0f0"/><path d="M10.5 0.5H21L25 4.5V17H10.5Z" fill="#eef2f8" stroke="#a8b6d0"/><path d="M13 6H22M13 9H22M13 12H22" stroke="#b0bdd3" stroke-width="0.8"/><path d="M14.5 4H25L29 8V21H14.5Z" fill="#eef2f8" stroke="#a8b6d0"/><path d="M17 10H26M17 13H26M17 16H26" stroke="#b0bdd3" stroke-width="0.8"/></svg>
<div class="t ex" style="left:356px;top:514.9px;color:#8d8d8d;transform:scaleX(0.968)">Copy</div>
<div class="t ex" style="left:360px;top:528.7px;color:#8d8d8d">to</div>
<svg style="left:374px;top:532px" width="6" height="4" viewBox="0 0 6 4"><path d="M0 0H6L3 3Z" fill="#b0b0b0"/></svg>
<svg style="left:410px;top:478px" width="28" height="28" viewBox="0 0 28 28"><path d="M2 2L26 26M26 2L2 26" stroke="#7688a8" stroke-width="3.6"/></svg>
<div class="t ex" style="left:406px;top:514.9px;color:#222;transform:scaleX(0.977)">Delete</div>
<svg style="left:421px;top:532px" width="7" height="4" viewBox="0 0 7 4"><path d="M0 0H7L3.5 3.5Z" fill="#111"/></svg>
<svg style="left:455px;top:477px" width="33" height="30" viewBox="0 0 33 30"><rect x="1" y="8" width="30" height="14" fill="#e0e7f2" stroke="#a8b6d0"/><rect x="4" y="11.5" width="13" height="7" fill="#8b9ab8"/><path d="M24.5 2V28M21 1.5H28M21 28.5H28" stroke="#8b9ab8" stroke-width="2"/></svg>
<div class="t ex" style="left:450px;top:514.9px;color:#8d8d8d;transform:scaleX(0.918)">Rename</div>
<div class="t ex" style="left:373px;top:550px;color:#444;transform:scaleX(1.034)">Organize</div>

<!-- new -->
<svg style="left:517px;top:478px" width="23" height="31" viewBox="0 0 23 31"><path d="M1 1H14L16 3H20V27H1Z" fill="#fcd873"/><path d="M1 2H15V30L1 26Z" fill="#fde59a"/><path d="M15 21H21V27H15Z" fill="#f3c84e"/></svg>
<div class="t ex" style="left:518.5px;top:514.9px;color:#222;transform:scaleX(0.968)">New</div>
<div class="t ex" style="left:513px;top:528.7px;color:#222;transform:scaleX(1.065)">folder</div>
<svg style="left:555px;top:474px" width="19" height="19" viewBox="0 0 19 19"><rect x="1" y="1" width="10" height="8" fill="#dbe6f5" stroke="#5a7fb8"/><path d="M3 3H9" stroke="#2a6acc"/><rect x="5" y="5" width="9" height="11" fill="#fff" stroke="#777"/><rect x="8" y="8" width="9" height="10" fill="#fff" stroke="#777"/><path d="M10 11H15M10 13H15M10 15H15" stroke="#d58" stroke-width="0.7"/></svg>
<div class="t ex" style="left:577px;top:477.9px;color:#222;transform:scaleX(0.988)">New item</div>
<svg style="left:631px;top:481px" width="7" height="4" viewBox="0 0 7 4"><path d="M0 0H7L3.5 3.5Z" fill="#222"/></svg>
<svg style="left:555px;top:496px" width="17" height="20" viewBox="0 0 17 20"><path d="M4.5 1H12L16 5V19H4.5Z" fill="#fff" stroke="#666"/><path d="M1 6H7M2 8.5H8M1 11H6" stroke="#2a6acc" stroke-width="1"/></svg>
<div class="t ex" style="left:577px;top:501.2px;color:#222;transform:scaleX(0.863)">Easy access</div>
<svg style="left:641px;top:505px" width="7" height="4" viewBox="0 0 7 4"><path d="M0 0H7L3.5 3.5Z" fill="#222"/></svg>
<div class="t ex" style="left:567px;top:550px;color:#444;transform:scaleX(0.928)">New</div>

<!-- open -->
<svg style="left:680px;top:476px" width="25" height="32" viewBox="0 0 25 32"><path d="M1 1H18L23.5 6.5V31H1Z" fill="#fff" stroke="#555" stroke-width="1"/><path d="M5 16L10 21L19 11" fill="none" stroke="#e8501c" stroke-width="2.6"/></svg>
<div class="t ex" style="left:665px;top:514.9px;color:#222;transform:scaleX(0.991)">Properties</div>
<svg style="left:688.5px;top:532px" width="7" height="4" viewBox="0 0 7 4"><path d="M0 0H7L3.5 3.5Z" fill="#111"/></svg>
<svg style="left:728px;top:475px" width="16" height="18" viewBox="0 0 16 18"><rect x="1" y="1" width="12" height="14" fill="#e8edf5" stroke="#9aaac6"/><path d="M3 4H5M3 7H5M3 10H5M7 4H11M7 7H10" stroke="#7b8db0" stroke-width="1.2"/><path d="M11 17V10.5M8.5 13L11 10L13.5 13" stroke="#9aaccc" stroke-width="2" fill="none"/></svg>
<div class="t ex" style="left:747px;top:477.9px;color:#8d8d8d;transform:scaleX(1.023)">Open</div>
<svg style="left:782px;top:481px" width="7" height="4" viewBox="0 0 7 4"><path d="M0 0H7L3.5 3.5Z" fill="#b0b0b0"/></svg>
<svg style="left:728px;top:498px" width="16" height="18" viewBox="0 0 16 18"><path d="M1 1H9.5L13 4.5V17H1Z" fill="#eef2f8" stroke="#a8b6d0"/><path d="M5 14L6 11L14 3L15.5 4.5L7.5 12.5Z" fill="#c8d4e8" stroke="#9aaac6" stroke-width="0.8"/></svg>
<div class="t ex" style="left:747px;top:501.2px;color:#8d8d8d;transform:scaleX(1.030)">Edit</div>
<svg style="left:726px;top:521px" width="19" height="19" viewBox="0 0 19 19"><rect x="1" y="1" width="11" height="14" fill="#fbe088" stroke="#e8c45a" stroke-width="0.8"/><circle cx="12" cy="12" r="6" fill="#e8e8e8" stroke="#777" stroke-width="1"/><path d="M12 8.5V12L14 13.5" stroke="#555" stroke-width="1" fill="none"/><path d="M2 13L5.5 9.5V11.5H8.5V14.5H5.5V16.5Z" fill="#2e9e3a"/></svg>
<div class="t ex" style="left:747px;top:525px;color:#222;transform:scaleX(1.011)">History</div>
<div class="t ex" style="left:712px;top:550px;color:#444;transform:scaleX(1.023)">Open</div>

<!-- select -->
<svg style="left:807px;top:474px" width="19" height="19" viewBox="0 0 19 19"><rect x="1" y="1" width="7.5" height="7.5" fill="#9fd2f7" stroke="#2e8de0"/><rect x="10.5" y="1" width="7.5" height="7.5" fill="#9fd2f7" stroke="#2e8de0"/><rect x="1" y="10.5" width="7.5" height="7.5" fill="#9fd2f7" stroke="#2e8de0"/><rect x="10.5" y="10.5" width="7.5" height="7.5" fill="#9fd2f7" stroke="#2e8de0"/></svg>
<div class="t ex" style="left:828px;top:477.9px;color:#222;transform:scaleX(0.975)">Select all</div>
<svg style="left:808px;top:498px" width="17" height="17" viewBox="0 0 17 17"><rect x="1" y="1" width="5.5" height="5.5" fill="none" stroke="#aaa"/><rect x="10" y="1" width="5.5" height="5.5" fill="none" stroke="#aaa"/><rect x="1" y="10" width="5.5" height="5.5" fill="none" stroke="#aaa"/><rect x="10" y="10" width="5.5" height="5.5" fill="none" stroke="#aaa"/></svg>
<div class="t ex" style="left:828px;top:501.2px;color:#222;transform:scaleX(0.978)">Select none</div>
<svg style="left:807px;top:521px" width="19" height="19" viewBox="0 0 19 19"><rect x="1.5" y="1.5" width="5.5" height="5.5" fill="none" stroke="#aaa"/><rect x="10.5" y="1" width="7.5" height="7.5" fill="#9fd2f7" stroke="#2e8de0"/><rect x="1" y="10.5" width="7.5" height="7.5" fill="#9fd2f7" stroke="#2e8de0"/><rect x="11.5" y="11.5" width="5.5" height="5.5" fill="none" stroke="#aaa"/></svg>
<div class="t ex" style="left:828px;top:525px;color:#222;transform:scaleX(1.008)">Invert selection</div>
<div class="t ex" style="left:845px;top:550px;color:#444;transform:scaleX(0.929)">Select</div>

<!-- address row -->
<svg style="left:31px;top:581px" width="15" height="13" viewBox="0 0 15 13"><path d="M14 6.5H1.8M6.5 1.5L1.5 6.5L6.5 11.5" fill="none" stroke="#666" stroke-width="1.7"/></svg>
<svg style="left:63px;top:581px" width="15" height="13" viewBox="0 0 15 13"><path d="M1 6.5H13.2M8.5 1.5L13.5 6.5L8.5 11.5" fill="none" stroke="#d2d2d2" stroke-width="1.7"/></svg>
<svg style="left:91px;top:584px" width="9" height="6" viewBox="0 0 9 6"><path d="M1 1L4.5 4.5L8 1" fill="none" stroke="#666" stroke-width="1.4"/></svg>
<svg style="left:110px;top:581px" width="15" height="15" viewBox="0 0 15 15"><path d="M7.5 14.5V1.8M1.8 7.2L7.5 1.5L13.2 7.2" fill="none" stroke="#666" stroke-width="1.7"/></svg>
<div class="a" style="left:131.5px;top:571.5px;width:702px;height:32px;border:1px solid #d9d9d9;background:#fff"></div>
<div class="a" style="left:801px;top:572px;width:1px;height:31px;background:#d9d9d9"></div>
<svg style="left:136px;top:578px" width="16" height="18" viewBox="0 0 16 18"><path d="M1 1H12.5V16.5H1Z" fill="#fde48e" stroke="#e8c35a" stroke-width="0.8"/><path d="M11 10H14.5V17H11Z" fill="#f5cf62"/></svg>
<svg style="left:159px;top:583px" width="6" height="9" viewBox="0 0 6 9"><path d="M1 1L4.5 4.5L1 8" fill="none" stroke="#555" stroke-width="1.1"/></svg>
<div class="t ex" style="left:174px;top:581.5px;color:#111;transform:scaleX(0.930)">This PC</div>
<svg style="left:224px;top:583px" width="6" height="9" viewBox="0 0 6 9"><path d="M1 1L4.5 4.5L1 8" fill="none" stroke="#555" stroke-width="1.1"/></svg>
<div class="t ex" style="left:240px;top:581.5px;color:#111;transform:scaleX(1.028)">Downloads</div>
<svg style="left:313px;top:583px" width="6" height="9" viewBox="0 0 6 9"><path d="M1 1L4.5 4.5L1 8" fill="none" stroke="#555" stroke-width="1.1"/></svg>
<div class="t ex" style="left:328px;top:581.5px;color:#111;transform:scaleX(1.010)">Hazid</div>
<svg style="left:780px;top:584px" width="11" height="7" viewBox="0 0 11 7"><path d="M1 1L5.5 5.5L10 1" fill="none" stroke="#444" stroke-width="1.4"/></svg>
<svg style="left:810px;top:580px" width="14" height="14" viewBox="0 0 14 14"><path d="M3.5 3.2A5 5 0 1 0 7 2" fill="none" stroke="#555" stroke-width="1.5"/><path d="M6 0L9.5 2L6 4.5Z" fill="#555"/></svg>
<div class="a" style="left:846.5px;top:571px;width:158px;height:32px;border:1px solid #d9d9d9;background:#fff"></div>
<svg style="left:861px;top:580px" width="15" height="15" viewBox="0 0 15 15"><circle cx="9.5" cy="5.5" r="4.2" fill="none" stroke="#777" stroke-width="1"/><path d="M6.5 8.5L1.5 13.5" stroke="#777" stroke-width="1.2"/></svg>
<div class="t ex" style="left:890px;top:581.5px;color:#6d6d6d;transform:scaleX(0.981)">Search Hazid</div>

<!-- nav pane -->
<div class="a" style="left:298px;top:611px;width:1px;height:210px;background:#ececec"></div>
<div class="a" style="left:18px;top:730px;width:278px;height:26px;background:#cce8ff"></div>
<svg style="left:26px;top:636px" width="7" height="150" viewBox="0 0 7 150"><path d="M1.5 1L5.5 5L1.5 9 M1.5 35L5.5 39L1.5 43 M1.5 69L5.5 73L1.5 77 M1.5 103L5.5 107L1.5 111 M1.5 137L5.5 141L1.5 145" fill="none" stroke="#777" stroke-width="1.1"/></svg>
<svg style="left:45px;top:633px" width="17" height="15" viewBox="0 0 17 15"><path d="M10 0.5L12 5.5L17 6L13 9.5L14.3 14.5L10 11.5L5.7 14.5L7 9.5L3 6L8 5.5Z" fill="#2d8fe8"/><path d="M0 8H4M1 10.5H5M2 13H6" stroke="#8cc4f2" stroke-width="0.8"/></svg>
<div class="t ex" style="left:66px;top:634.5px;color:#111;transform:scaleX(0.991)">Quick access</div>
<svg style="left:44px;top:668px" width="18" height="13" viewBox="0 0 18 13"><path d="M2.5 12.5Q0 12.5 0 10Q0 7.5 3 7.5Q3.5 3 8 3Q11 1 14 4Q18 4.5 17.5 9Q17.5 12.5 14.5 12.5Z" fill="#1a7ad4"/></svg>
<div class="t ex" style="left:66px;top:668.5px;color:#111;transform:scaleX(1.017)">OneDrive - Wolters Kluwer</div>
<svg style="left:47px;top:702px" width="12" height="17" viewBox="0 0 12 17"><rect x="1" y="1" width="7" height="15" fill="#2a7ad8"/><rect x="7" y="7" width="4.5" height="9" fill="#2a7ad8"/><path d="M3 3.5H6M3 6H6M3 8.5H6M3 11H6" stroke="#fff" stroke-width="1"/><path d="M8.5 9.5H10.5M8.5 12H10.5" stroke="#fff" stroke-width="0.8"/></svg>
<div class="t ex" style="left:66px;top:702.5px;color:#111;transform:scaleX(1.011)">Wolters Kluwer</div>
<svg style="left:44px;top:735px" width="18" height="17" viewBox="0 0 18 17"><rect x="0.5" y="0.5" width="17" height="11" fill="#4fc3f7" stroke="#1e88c9"/><path d="M7 12V14H11V12" fill="#888"/><path d="M1 15.5H17" stroke="#8a8a8a" stroke-width="1.2"/></svg>
<div class="t ex" style="left:66px;top:736.5px;color:#111;transform:scaleX(0.930)">This PC</div>
<svg style="left:44px;top:768px" width="18" height="19" viewBox="0 0 18 19"><circle cx="12" cy="6" r="5.5" fill="#5aa8e8"/><path d="M8 3Q12 5 16 3M8 8Q12 7 16 9" stroke="#cfe8fb" stroke-width="0.8" fill="none"/><rect x="0.5" y="7.5" width="11" height="8" fill="#4fc3f7" stroke="#1e88c9"/><path d="M6 16V18M3 18.5H9" stroke="#888"/></svg>
<div class="t ex" style="left:66px;top:770.5px;color:#111;transform:scaleX(1.056)">Network</div>

<!-- file list -->
<div class="a" style="left:312.5px;top:617.5px;width:14px;height:14px;border:1px solid #777;background:#fff"></div>
<div class="t ex" style="left:337px;top:619px;color:#4c607a;transform:scaleX(1.028)">Name</div>
<svg style="left:447px;top:610px" width="9" height="6" viewBox="0 0 9 6"><path d="M1 5L4.5 1.5L8 5" fill="none" stroke="#999" stroke-width="1"/></svg>
<div class="a" style="left:591px;top:611px;width:1px;height:28px;background:#e5e5e5"></div>
<div class="t ex" style="left:598px;top:619px;color:#4c607a;transform:scaleX(1.033)">Date modified</div>
<div class="a" style="left:745px;top:611px;width:1px;height:28px;background:#e5e5e5"></div>
<div class="t ex" style="left:752px;top:619px;color:#4c607a;transform:scaleX(0.930)">Type</div>
<div class="a" style="left:873px;top:611px;width:1px;height:28px;background:#e5e5e5"></div>
<div class="t ex" style="left:880px;top:619px;color:#4c607a;transform:scaleX(0.871)">Size</div>
<div class="a" style="left:958px;top:611px;width:1px;height:28px;background:#e5e5e5"></div>
<svg style="left:334px;top:646px" width="19" height="19" viewBox="0 0 19 19"><path d="M5 1H13L17.5 5.5V18H5Z" fill="#fff" stroke="#888" stroke-width="1"/><rect x="0.5" y="5" width="10" height="10" fill="#1e7a3f"/><path d="M3 7.5L8 12.5M8 7.5L3 12.5" stroke="#fff" stroke-width="1.5"/><rect x="11.5" y="11" width="5" height="6" fill="none" stroke="#21a366" stroke-width="1.3"/></svg>
<div class="t ex" style="left:357px;top:649.5px;color:#111;transform:scaleX(0.994)">HAZID to Bowtie Spreadsheet v3.0</div>
<div class="t ex" style="left:598px;top:649.5px;color:#6d6d6d;transform:scaleX(0.996)">18-Aug-22 3:28 PM</div>
<div class="t ex" style="left:752px;top:649.5px;color:#6d6d6d;transform:scaleX(1.018)">Microsoft Excel M...</div>
<div class="t ex" style="left:913px;top:649.5px;color:#6d6d6d;transform:scaleX(0.910)">130 KB</div>

<!-- status bar -->
<div class="t ex" style="left:34px;top:829.2px;color:#222;transform:scaleX(1.007)">1 item</div>
<div class="a" style="left:79.5px;top:829px;width:1px;height:13px;background:#eee"></div>
<div class="a" style="left:966px;top:822.5px;width:24px;height:25px;background:#cce8f4;border:2px solid #38a3dc;border-radius:1px"></div>
<svg style="left:970px;top:828px" width="17" height="14" viewBox="0 0 17 14"><rect x="1" y="0.5" width="4.5" height="13" fill="#fff" stroke="#888" stroke-width="0.8"/><path d="M6.5 2.5H10M12 2.5H16M6.5 7H10M12 7H16M6.5 11.5H10M12 11.5H16" stroke="#777" stroke-width="1.3"/></svg>
<svg style="left:994px;top:828px" width="16" height="12" viewBox="0 0 16 12"><rect x="0.5" y="0.5" width="15" height="11" fill="#fff" stroke="#888"/><rect x="2" y="2" width="12" height="8" fill="#4a90d9"/><path d="M2 6Q6 4 9 7L14 9V10H2Z" fill="#2a6040"/></svg>

<!-- dashed arrow -->
<svg style="left:0;top:0" width="1582" height="861" viewBox="0 0 1582 861"><g fill="#0076c2"><rect x="574.3" y="698" width="27.2" height="9"/><rect x="610.3" y="698" width="27.2" height="9"/><rect x="646.3" y="698" width="27.2" height="9"/><rect x="682.3" y="698" width="27.2" height="9"/><rect x="718.3" y="698" width="27.2" height="9"/><rect x="754.3" y="698" width="27.2" height="9"/><rect x="790.3" y="698" width="27.2" height="9"/><rect x="826.3" y="698" width="27.2" height="9"/><rect x="862.3" y="698" width="27.2" height="9"/><rect x="898.3" y="698" width="27.2" height="9"/><rect x="934.3" y="698" width="27.2" height="9"/><rect x="970.3" y="698" width="27.2" height="9"/><rect x="1006.3" y="698" width="27.2" height="9"/><rect x="1042.3" y="698" width="27.2" height="9"/><rect x="1078.3" y="698" width="27.2" height="9"/><rect x="1114.3" y="698" width="27.2" height="9"/><rect x="1150.3" y="698" width="27.2" height="9"/><rect x="1186.3" y="698" width="27.2" height="9"/><rect x="1222.3" y="698" width="6" height="9"/><path d="M1227 689L1254.5 702.5L1227 716Z"/></g></svg>

</body></html>
